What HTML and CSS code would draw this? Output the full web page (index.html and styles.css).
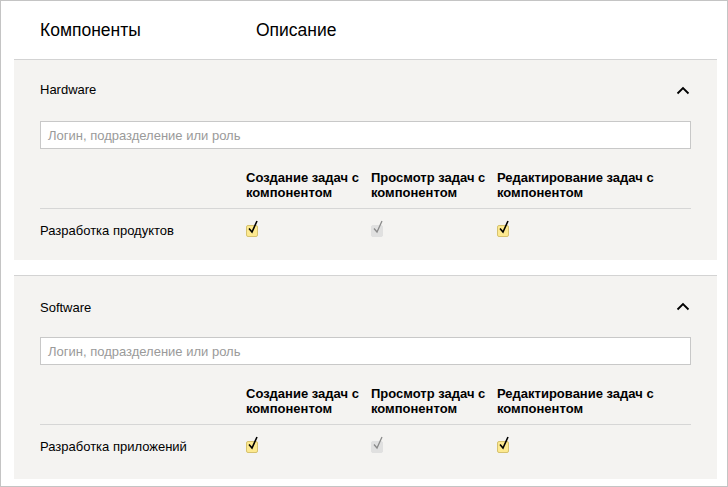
FILE: index.html
```html
<!DOCTYPE html>
<html lang="ru">
<head>
<meta charset="utf-8">
<title>Компоненты</title>
<link rel="stylesheet" href="styles.css">
</head>
<body>
<div class="frame">
  <div class="head">
    <div class="head-col head-name">Компоненты</div>
    <div class="head-col">Описание</div>
  </div>

  <section class="group">
    <div class="group-title">
      <span>Hardware</span>
      <svg class="chevron" width="14" height="9" viewBox="0 0 14 9"><polyline points="1.5,7.5 7,2 12.5,7.5" fill="none" stroke="#000" stroke-width="1.8"/></svg>
    </div>
    <div class="search"><span class="placeholder">Логин, подразделение или роль</span></div>
    <div class="grid grid-head">
      <div></div>
      <div class="th">Создание задач с<br>компонентом</div>
      <div class="th">Просмотр задач с<br>компонентом</div>
      <div class="th">Редактирование задач с<br>компонентом</div>
    </div>
    <div class="grid grid-row">
      <div class="label">Разработка продуктов</div>
      <div class="cell"><span class="cb"><span class="box"></span><svg class="tick" width="16" height="17" viewBox="0 0 16 17"><polyline points="3,8.5 6,12 11,1" fill="none" stroke="#000" stroke-width="1.6"/></svg></span></div>
      <div class="cell"><span class="cb cb-off"><span class="box"></span><svg class="tick" width="16" height="17" viewBox="0 0 16 17"><polyline points="3,8.5 6,12 11,1" fill="none" stroke="#8a8a8a" stroke-width="1.3"/></svg></span></div>
      <div class="cell"><span class="cb"><span class="box"></span><svg class="tick" width="16" height="17" viewBox="0 0 16 17"><polyline points="3,8.5 6,12 11,1" fill="none" stroke="#000" stroke-width="1.6"/></svg></span></div>
    </div>
  </section>

  <section class="group group-next">
    <div class="group-title">
      <span>Software</span>
      <svg class="chevron" width="14" height="9" viewBox="0 0 14 9"><polyline points="1.5,7.5 7,2 12.5,7.5" fill="none" stroke="#000" stroke-width="1.8"/></svg>
    </div>
    <div class="search"><span class="placeholder">Логин, подразделение или роль</span></div>
    <div class="grid grid-head">
      <div></div>
      <div class="th">Создание задач с<br>компонентом</div>
      <div class="th">Просмотр задач с<br>компонентом</div>
      <div class="th">Редактирование задач с<br>компонентом</div>
    </div>
    <div class="grid grid-row">
      <div class="label">Разработка приложений</div>
      <div class="cell"><span class="cb"><span class="box"></span><svg class="tick" width="16" height="17" viewBox="0 0 16 17"><polyline points="3,8.5 6,12 11,1" fill="none" stroke="#000" stroke-width="1.6"/></svg></span></div>
      <div class="cell"><span class="cb cb-off"><span class="box"></span><svg class="tick" width="16" height="17" viewBox="0 0 16 17"><polyline points="3,8.5 6,12 11,1" fill="none" stroke="#8a8a8a" stroke-width="1.3"/></svg></span></div>
      <div class="cell"><span class="cb"><span class="box"></span><svg class="tick" width="16" height="17" viewBox="0 0 16 17"><polyline points="3,8.5 6,12 11,1" fill="none" stroke="#000" stroke-width="1.6"/></svg></span></div>
    </div>
  </section>
</div>
</body>
</html>
```
FILE: styles.css
```css
* { box-sizing: border-box; }
html, body { margin: 0; padding: 0; background: #fff; }
body {
  font-family: "Liberation Sans", Arial, sans-serif;
  color: #000;
  font-size: 13px;
}
.frame {
  width: 728px;
  height: 487px;
  border: 1px solid #c4c4c4;
  padding: 0 10px 0 13px;
  overflow: hidden;
}
.head {
  height: 59px;
  display: flex;
  align-items: center;
  padding-left: 26px;
  border-bottom: 1px solid #d3d3d3;
  font-size: 17.5px;
}
.head-name { width: 216px; }
.group {
  background: #f4f3f1;
  padding: 22px 26px 0 26px;
}
.group-next {
  margin-top: 15px;
  border-top: 1px solid #d3d3d3;
  padding-top: 24px;
  padding-bottom: 3px;
}
.group-title {
  display: flex;
  justify-content: space-between;
  align-items: center;
  height: 15px;
  line-height: 15px;
}
.chevron { margin-right: 1px; margin-top: 2px; }
.group-next .chevron { margin-top: -2px; }
.search {
  margin-top: 24px;
  height: 28px;
  background: #fff;
  border: 1px solid #c8c8c8;
  padding-left: 7px;
  display: flex;
  align-items: center;
}
.group-next .search { margin-top: 22px; }
.placeholder { color: #9a9a9a; }
.grid {
  display: grid;
  grid-template-columns: 206px 125px 126px 1fr;
}
.grid-head {
  margin-top: 21px;
  padding-bottom: 8px;
  border-bottom: 1px solid #d6d6d6;
}
.th {
  font-weight: bold;
  line-height: 15px;
}
.grid-row { height: 51px; }
.label {
  padding-top: 14px;
  line-height: 15px;
}
.cell { padding-top: 11px; }
.cb {
  position: relative;
  display: block;
  width: 16px;
  height: 17px;
  padding-top: 5px;
}
.box {
  display: block;
  width: 12px;
  height: 12px;
  border: 1px solid #d6c26f;
  border-radius: 2px;
  background: #fde98f;
}
.cb-off .box {
  border-color: #e0e0e0;
  background: #e0e0e0;
}
.tick {
  position: absolute;
  left: 0;
  top: 0;
}
```
